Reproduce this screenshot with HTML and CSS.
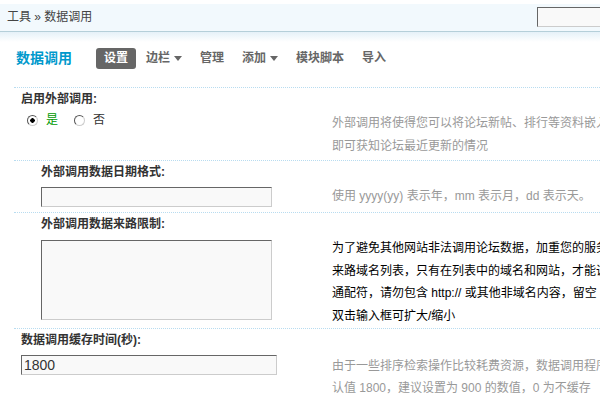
FILE: index.html
```html
<!DOCTYPE html>
<html lang="zh-CN">
<head>
  <meta charset="UTF-8">
  <title>数据调用</title>
  <link rel="stylesheet" href="styles.css">
</head>
<body>
  <div class="topbar">
    <div class="crumb">工具 <span class="sep">&raquo;</span> 数据调用</div>
    <input class="search" type="text">
  </div>

  <div class="header">
    <h2 class="page-title">数据调用</h2>
    <ul class="tabs">
      <li class="tab active">设置</li>
      <li class="tab">边栏<span class="caret"></span></li>
      <li class="tab">管理</li>
      <li class="tab">添加<span class="caret"></span></li>
      <li class="tab">模块脚本</li>
      <li class="tab">导入</li>
    </ul>
  </div>

  <div class="settings">
    <div class="setting">
      <div class="setting-title">启用外部调用:</div>
      <div class="setting-body">
        <div class="radios">
          <label class="choice checked"><input class="radio" type="radio" name="jsstatus" checked>是</label>
          <label class="choice"><input class="radio" type="radio" name="jsstatus">否</label>
        </div>
        <div class="tips">
          外部调用将使得您可以将论坛新帖、排行等资料嵌入到您的网站页面中<br>
          即可获知论坛最近更新的情况
        </div>
      </div>
    </div>

    <div class="setting">
      <div class="setting-title sub">外部调用数据日期格式:</div>
      <div class="setting-body">
        <div class="field sub">
          <input class="text" type="text" value="">
        </div>
        <div class="tips">使用 yyyy(yy) 表示年，mm 表示月，dd 表示天。</div>
      </div>
    </div>

    <div class="setting">
      <div class="setting-title sub">外部调用数据来路限制:</div>
      <div class="setting-body">
        <div class="field sub area">
          <textarea class="textarea"></textarea>
        </div>
        <div class="tips dark">
          为了避免其他网站非法调用论坛数据，加重您的服务器负担<br>
          来路域名列表，只有在列表中的域名和网站，才能调用<br>
          通配符，请勿包含 http:// 或其他非域名内容，留空<br>
          双击输入框可扩大/缩小
        </div>
      </div>
    </div>

    <div class="setting">
      <div class="setting-title">数据调用缓存时间(秒):</div>
      <div class="setting-body">
        <div class="field">
          <input class="text wide" type="text" value="1800">
        </div>
        <div class="tips low">
          由于一些排序检索操作比较耗费资源，数据调用程序<br>
          认值 1800，建议设置为 900 的数值，0 为不缓存
        </div>
      </div>
    </div>
  </div>
</body>
</html>
```

FILE: styles.css
```css
html, body {
  overflow: hidden;
}

body {
  margin: 0;
  font: 12px "Liberation Sans", "Noto Sans CJK SC", sans-serif;
  color: #333;
}

/* top breadcrumb bar */
.topbar {
  margin-top: 4px;
  height: 27px;
  background: #f2f9fd;
  border-bottom: 1px solid #b5cfd9;
  display: flex;
  justify-content: space-between;
  align-items: flex-start;
}

.crumb {
  padding-left: 7px;
  line-height: 27px;
  color: #444;
}

.search {
  margin: 3px -14px 0 0;
  width: 77px;
  height: 20px;
  box-sizing: border-box;
  padding: 0 2px;
  border: 1px solid;
  border-color: #666 #ccc #ccc #666;
  background: #f9f9f9;
}

/* title + tabs */
.header {
  background: linear-gradient(#e5f1f8, #fff 10px);
  padding: 16px 0 18px 16px;
  display: flex;
  align-items: center;
}

.page-title {
  margin: 0 24px 0 0;
  font-size: 14px;
  line-height: 21px;
  color: #09c;
}

.tabs {
  list-style: none;
  margin: 0;
  padding: 0;
  display: flex;
  gap: 2px;
}

.tab {
  padding: 0 8px;
  line-height: 21px;
  font-weight: bold;
  color: #666;
  border-radius: 3px;
}

.tab.active {
  background: #666;
  color: #fff;
}

.caret {
  display: inline-block;
  margin-left: 4px;
  border-style: solid;
  border-width: 5px 4px 0;
  border-color: #666 transparent transparent;
  vertical-align: middle;
}

/* settings table */
.settings {
  margin-left: 14px;
}

.setting-title {
  border-top: 1px dotted #b8dcf0;
  padding-left: 7px;
  line-height: 22px;
  font-weight: bold;
}

.setting-title.sub {
  padding-left: 27px;
}

.setting-body {
  display: grid;
  grid-template-columns: 318px auto;
}

.radios {
  height: 50px;
  padding-left: 13px;
  line-height: 20px;
  display: flex;
  align-items: flex-start;
  gap: 16px;
}

.choice {
  display: inline-flex;
  align-items: center;
  gap: 8px;
  height: 20px;
}

.choice.checked {
  color: #090;
}

.radio {
  appearance: none;
  margin: 0;
  width: 11px;
  height: 11px;
  border: 1px solid;
  border-color: #555 #ccc #ccc #555;
  border-radius: 50%;
  background: #fff;
}

.radio:checked {
  background: radial-gradient(circle, #000 0 2px, #fff 2.5px);
}

.field {
  padding: 4px 0 5px 7px;
}

.field.sub {
  padding-left: 27px;
}

.field.area {
  padding-top: 5px;
  padding-bottom: 8px;
}

.text {
  display: block;
  width: 231px;
  height: 20px;
  box-sizing: border-box;
  margin: 0;
  padding: 0 2px;
  border: 1px solid;
  border-color: #666 #ccc #ccc #666;
  background: #f9f9f9;
  font: 14px "Liberation Sans", sans-serif;
  color: #333;
}

.text.wide {
  width: 256px;
}

.textarea {
  display: block;
  width: 231px;
  height: 80px;
  box-sizing: border-box;
  margin: 0;
  border: 1px solid;
  border-color: #666 #ccc #ccc #666;
  background: #f9f9f9;
  resize: none;
}

.tips {
  padding-top: 2px;
  line-height: 23px;
  color: #999;
  white-space: nowrap;
}

.tips.dark {
  color: #000;
  line-height: 22.5px;
}

.tips.low {
  padding-top: 4px;
  line-height: 22px;
}
```
